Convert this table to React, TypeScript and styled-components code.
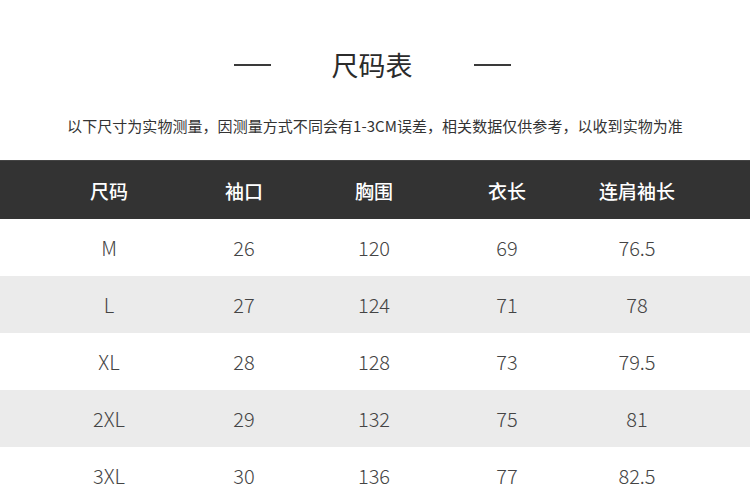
import styled, { createGlobalStyle } from 'styled-components';

const columns = ['尺码', '袖口', '胸围', '衣长', '连肩袖长'];
const rows = [
  ['M', '26', '120', '69', '76.5'],
  ['L', '27', '124', '71', '78'],
  ['XL', '28', '128', '73', '79.5'],
  ['2XL', '29', '132', '75', '81'],
  ['3XL', '30', '136', '77', '82.5'],
];

const App = () => {
  return (
    <Page>
      <GlobalStyle />
      <TitleRow>
        <Dash />
        <Title>尺码表</Title>
        <Dash />
      </TitleRow>
      <Note>以下尺寸为实物测量，因测量方式不同会有1-3CM误差，相关数据仅供参考，以收到实物为准</Note>
      <Table>
        <HeadRow>
          {columns.map((c) => (
            <HeadCell key={c}>{c}</HeadCell>
          ))}
        </HeadRow>
        {rows.map((r, i) => (
          <Row key={r[0]} striped={i % 2 === 1}>
            {r.map((v, j) => (
              <Cell key={j}>{v}</Cell>
            ))}
          </Row>
        ))}
      </Table>
    </Page>
  );
};

export default App;

const GlobalStyle = createGlobalStyle`
  body {
    margin: 0;
    background: #fff;
    font-family: "Noto Sans CJK SC", "Noto Sans", sans-serif;
  }
`;
const Page = styled.div`
  width: 750px;
  height: 498px;
  overflow: hidden;
  display: flex;
  flex-direction: column;
  background: #fff;
`;
const TitleRow = styled.div`
  display: flex;
  justify-content: center;
  align-items: center;
  gap: 61px;
  padding: 46px 6px 0 0;
  height: 38px;
`;
const Dash = styled.div`
  width: 37px;
  height: 2px;
  background: #3a3a3a;
`;
const Title = styled.h1`
  margin: 0;
  font-size: 27px;
  font-weight: 400;
  color: #2b2b2b;
  line-height: 38px;
`;
const Note = styled.p`
  margin: 32px 0 0;
  text-align: center;
  font-size: 15px;
  line-height: 20px;
  color: #333;
  letter-spacing: 0.05px;
`;
const Table = styled.div`
  margin-top: 24px;
  display: flex;
  flex-direction: column;
`;
const Grid = styled.div`
  display: grid;
  grid-template-columns: 136px 134px 126px 140px 120px;
  padding-left: 41px;
  align-items: center;
  box-sizing: border-box;
`;
const HeadRow = styled(Grid)`
  height: 59px;
  background: #333;
  border-top: 1px solid #444;
`;
const HeadCell = styled.div`
  text-align: center;
  color: #fff;
  font-size: 19px;
  font-weight: 500;
`;
const Row = styled(Grid)<{ striped: boolean }>`
  height: 57px;
  background: ${(p) => (p.striped ? '#ebebeb' : '#fff')};
`;
const Cell = styled.div`
  text-align: center;
  color: #444;
  font-size: 20px;
  font-weight: 300;
`;
